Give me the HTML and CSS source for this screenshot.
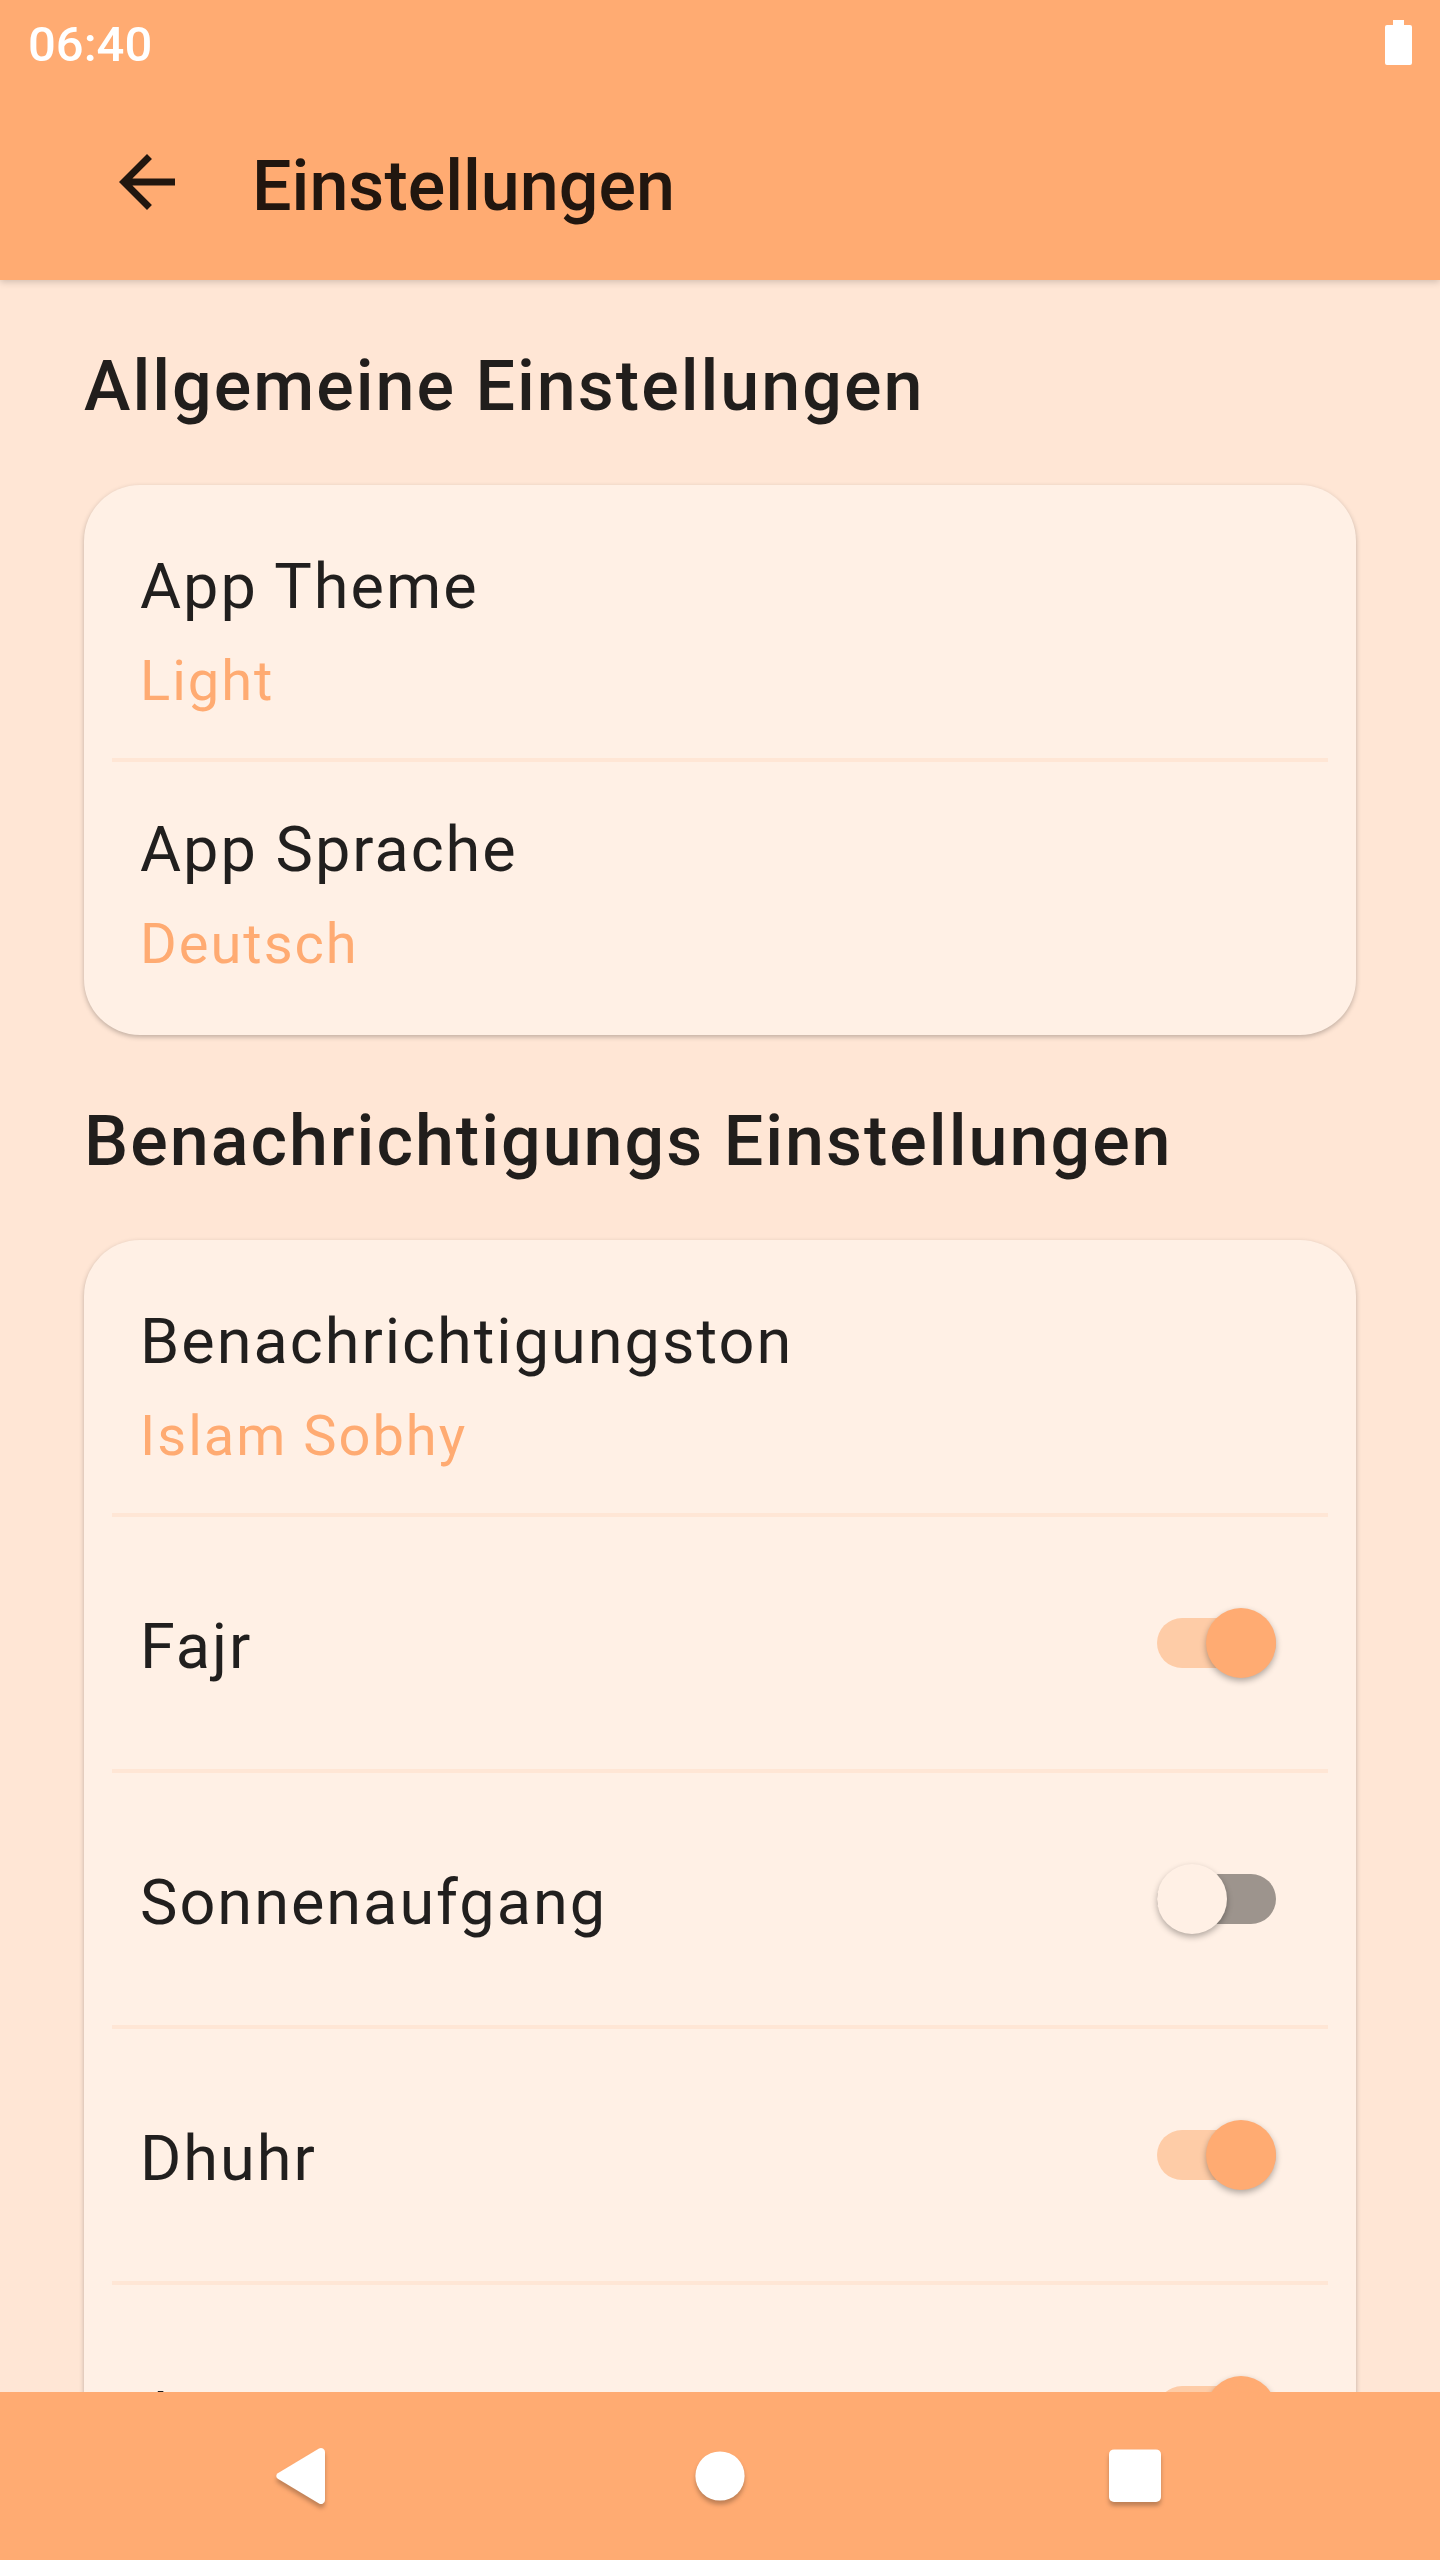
FILE: index.html
```html
<!DOCTYPE html>
<html lang="de">
<head>
  <meta charset="utf-8">
  <meta name="viewport" content="width=device-width, initial-scale=1">
  <title>Einstellungen</title>
  <link rel="stylesheet" href="styles.css">
</head>
<body>
  <div class="app">
    <div class="status-bar">
      <span class="clock">06:40</span>
      <svg class="battery" viewBox="0 0 27 45" role="img" aria-label="Akku">
        <path d="M8 0h11v5h6a2 2 0 0 1 2 2v36a2 2 0 0 1-2 2H2a2 2 0 0 1-2-2V7a2 2 0 0 1 2-2h6z"/>
      </svg>
    </div>

    <header class="toolbar">
      <button class="icon-button" type="button" aria-label="Zurück">
        <svg class="back-arrow" viewBox="0 0 24 24" aria-hidden="true">
          <path d="M20 11H7.83l5.59-5.59L12 4l-8 8 8 8 1.41-1.41L7.83 13H20v-2z"/>
        </svg>
      </button>
      <h1 class="toolbar-title">Einstellungen</h1>
    </header>

    <main class="content">
      <section>
        <h2 class="section-title">Allgemeine Einstellungen</h2>
        <div class="card">
          <button class="row choice" type="button">
            <span class="label">App Theme</span>
            <span class="value">Light</span>
          </button>
          <hr class="divider">
          <button class="row choice" type="button">
            <span class="label">App Sprache</span>
            <span class="value">Deutsch</span>
          </button>
        </div>
      </section>

      <section>
        <h2 class="section-title">Benachrichtigungs Einstellungen</h2>
        <div class="card">
          <button class="row choice" type="button">
            <span class="label">Benachrichtigungston</span>
            <span class="value">Islam Sobhy</span>
          </button>
          <hr class="divider">
          <div class="row toggle">
            <label class="label" for="fajr">Fajr</label>
            <input class="switch" id="fajr" type="checkbox" role="switch" checked>
          </div>
          <hr class="divider">
          <div class="row toggle">
            <label class="label" for="sunrise">Sonnenaufgang</label>
            <input class="switch" id="sunrise" type="checkbox" role="switch">
          </div>
          <hr class="divider">
          <div class="row toggle">
            <label class="label" for="dhuhr">Dhuhr</label>
            <input class="switch" id="dhuhr" type="checkbox" role="switch" checked>
          </div>
          <hr class="divider">
          <div class="row toggle">
            <label class="label" for="asr">Asr</label>
            <input class="switch" id="asr" type="checkbox" role="switch" checked>
          </div>
        </div>
      </section>
    </main>

    <nav class="nav-bar" aria-label="System">
      <button class="nav-button" type="button" aria-label="Zurück">
        <svg class="nav-icon" viewBox="0 0 56 56" aria-hidden="true">
          <path d="M43 .6a4 4 0 0 1 6 3.4v48a4 4 0 0 1-6 3.4L1.8 30.8a3.3 3.3 0 0 1 0-5.6z"/>
        </svg>
      </button>
      <button class="nav-button" type="button" aria-label="Startseite">
        <svg class="nav-icon" viewBox="0 0 56 56" aria-hidden="true">
          <circle cx="28" cy="28" r="24.6"/>
        </svg>
      </button>
      <button class="nav-button" type="button" aria-label="Übersicht">
        <svg class="nav-icon" viewBox="0 0 56 56" aria-hidden="true">
          <rect x="1" y="1.4" width="52" height="52.6" rx="5"/>
        </svg>
      </button>
    </nav>
  </div>
</body>
</html>
```

FILE: styles.css
```css
:root {
  --accent: #ffab72;
  --background: #ffe6d5;
  --surface: #fff0e5;
  --text: rgba(0, 0, 0, 0.87);
}

* {
  box-sizing: border-box;
}

body {
  margin: 0;
  background: var(--background);
  color: var(--text);
  font-family: Roboto, "Liberation Sans", sans-serif;
}

button {
  border: 0;
  padding: 0;
  background: none;
  color: inherit;
  font: inherit;
  cursor: pointer;
}

.app {
  display: flex;
  flex-direction: column;
  height: 100vh;
}

.status-bar {
  display: flex;
  z-index: 2;
  flex: none;
  align-items: center;
  justify-content: space-between;
  height: 84px;
  padding: 0 28px;
  background: var(--accent);
  color: #fff;
}

.clock {
  padding-top: 6px;
  font-size: 49px;
  font-weight: 500;
  line-height: 58px;
}

.battery {
  width: 27px;
  height: 45px;
  fill: #fff;
}

.toolbar {
  display: flex;
  z-index: 1;
  flex: none;
  align-items: center;
  gap: 63px;
  height: 196px;
  padding: 0 105px;
  background: var(--accent);
  box-shadow: 0 2px 7px rgba(0, 0, 0, 0.18);
}

.icon-button {
  display: flex;
}

.back-arrow {
  width: 84px;
  height: 84px;
  fill: var(--text);
}

.toolbar-title {
  margin: 0;
  padding-top: 8px;
  font-size: 70px;
  font-weight: 500;
  line-height: 82px;
}

.content {
  flex: 1;
  min-height: 0;
  padding: 0 84px;
  overflow-y: auto;
  scrollbar-width: none;
}

.section-title {
  margin: 0;
  padding: 65px 0 58px;
  font-size: 70px;
  font-weight: 500;
  line-height: 82px;
  letter-spacing: 2px;
}

.card {
  padding: 14px 0;
  border-radius: 56px;
  background: var(--surface);
  box-shadow: 0 2px 5px rgba(0, 0, 0, 0.25);
}

.row {
  display: flex;
  width: 100%;
  letter-spacing: 2px;
}

.choice {
  flex-direction: column;
  gap: 24px;
  padding: 51px 56px 44px;
  text-align: left;
}

.toggle {
  align-items: center;
  justify-content: space-between;
  height: 252px;
  padding: 0 80px 0 56px;
}

.label {
  font-size: 63px;
  line-height: 74px;
}

.toggle .label {
  padding-top: 8px;
}

.value {
  color: var(--accent);
  font-size: 56px;
  line-height: 66px;
}

.divider {
  height: 4px;
  margin: 0 28px;
  border: 0;
  background: var(--background);
}

.switch {
  display: flex;
  flex: none;
  align-items: center;
  width: 119px;
  height: 50px;
  margin: 0;
  border-radius: 25px;
  appearance: none;
  background: #9d948d;
  cursor: pointer;
}

.switch::before {
  flex: none;
  width: 70px;
  height: 70px;
  border-radius: 50%;
  background: var(--surface);
  box-shadow: 0 3px 6px rgba(0, 0, 0, 0.3);
  content: "";
}

.switch:checked {
  justify-content: flex-end;
  background: #fecca7;
}

.switch:checked::before {
  background: var(--accent);
}

.nav-bar {
  display: grid;
  z-index: 1;
  flex: none;
  grid-template-columns: repeat(3, 1fr);
  height: 168px;
  padding: 0 96px;
  background: var(--accent);
}

.nav-button {
  display: flex;
  align-items: center;
  justify-content: center;
}

.nav-icon {
  width: 56px;
  height: 56px;
  overflow: visible;
  fill: #fff;
  filter: drop-shadow(0 4px 2px rgba(0, 0, 0, 0.25));
}
```
